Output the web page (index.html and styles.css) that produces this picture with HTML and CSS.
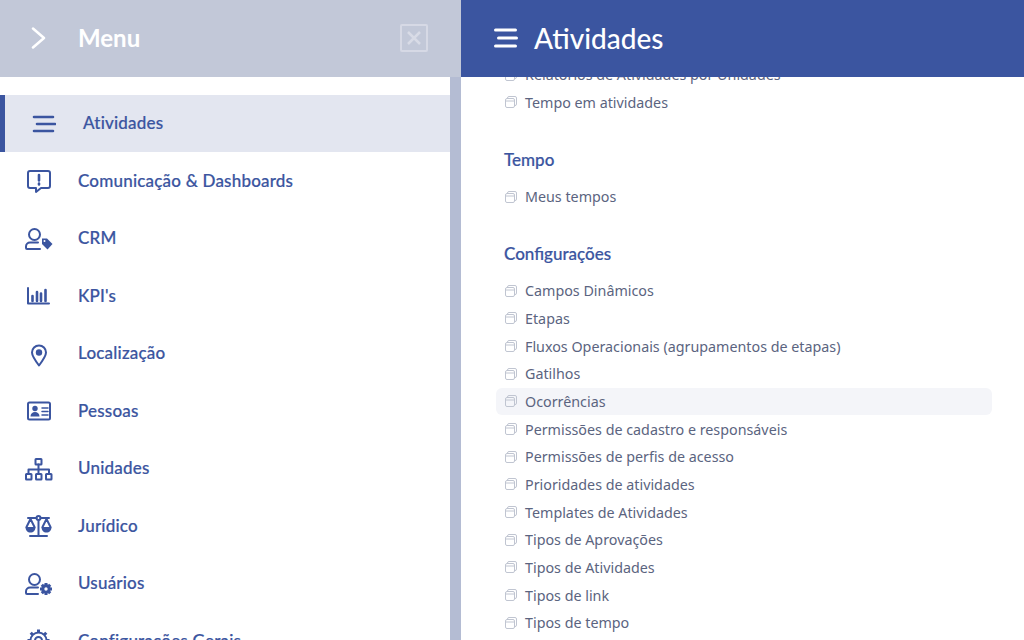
FILE: index.html
```html
<!DOCTYPE html>
<html lang="pt-BR">
<head>
    <meta charset="UTF-8">
    <title>Atividades</title>
    <link rel="stylesheet" href="styles.css">
</head>
<body>

    <!-- Shared icon for the submenu rows -->
    <svg class="sprite" width="0" height="0">
        <symbol id="i-copy" viewBox="0 0 12 12">
            <rect x="0.5" y="2.5" width="9" height="9" rx="1.5"/>
            <path d="M0.5 5h9M2.5 2.5V2a1.5 1.5 0 0 1 1.5-1.5h6A1.5 1.5 0 0 1 11.5 2v6a1.5 1.5 0 0 1-2 1.4"/>
        </symbol>
    </svg>

    <aside class="sidebar">
        <header class="side-head">
            <svg class="chevron" width="16" height="22" viewBox="0 0 16 22"><path d="M2 1.500l11 9.500-11 9.500"/></svg>
            <span class="side-title">Menu</span>
            <span class="close-box">
                <svg width="14" height="14" viewBox="0 0 14 14"><path d="M1 1l12 12M13 1L1 13"/></svg>
            </span>
        </header>

        <div class="side-body">
            <nav class="side-nav">
                <a class="nav-item active">
                    <svg class="nav-icon" viewBox="0 0 28 28"><path class="bold" d="M6 7h19M9 14h18M6 21h19"/></svg>
                    <span>Atividades</span>
                </a>
                <a class="nav-item">
                    <svg class="nav-icon" viewBox="0 0 28 28"><path d="M5 4h18a2 2 0 0 1 2 2v13a2 2 0 0 1-2 2h-7l-5 4v-4H5a2 2 0 0 1-2-2V6a2 2 0 0 1 2-2z"/><path class="bold" d="M14 8v5.500M14 16.500v1"/></svg>
                    <span>Comunicação &amp; Dashboards</span>
                </a>
                <a class="nav-item">
                    <svg class="nav-icon" viewBox="0 0 28 28"><circle cx="9.500" cy="9.500" r="5.500"/><path d="M13 17.500H5a4 4 0 0 0-4 4V23a1 1 0 0 0 1 1h13"/><path class="solid" d="M17 13.500h5l5.500 5.500-5 5.500-5.500-5.500z"/><circle class="hole" cx="19.500" cy="16" r="1"/></svg>
                    <span>CRM</span>
                </a>
                <a class="nav-item">
                    <svg class="nav-icon" viewBox="0 0 28 28"><path d="M3 6v15.500h21"/><path class="bold" d="M7.500 14v5M12 10v9M16 11.500V19M20.500 8v11"/></svg>
                    <span>KPI's</span>
                </a>
                <a class="nav-item">
                    <svg class="nav-icon" viewBox="0 0 28 28"><path d="M14 25.500C9.500 19.500 7 16 7 12.500a7 7 0 0 1 14 0c0 3.500-2.500 7-7 13z"/><circle class="solid" cx="14" cy="12.500" r="3.200"/></svg>
                    <span>Localização</span>
                </a>
                <a class="nav-item">
                    <svg class="nav-icon" viewBox="0 0 28 28"><rect x="3" y="5.500" width="22" height="17" rx="1.500"/><circle class="solid" cx="10" cy="11.500" r="2.700"/><path class="solid" d="M5.500 19.500c0-3 2-4.500 4.500-4.500s4.500 1.500 4.500 4.500z"/><path class="thin" d="M17 11h6M17 14.500h6M17 18h6"/></svg>
                    <span>Pessoas</span>
                </a>
                <a class="nav-item">
                    <svg class="nav-icon" viewBox="0 0 28 28"><rect x="10.500" y="4" width="6" height="5.500" rx="0.500"/><rect x="1" y="19" width="5.500" height="5.500" rx="0.500"/><rect x="11" y="19" width="5.500" height="5.500" rx="0.500"/><rect x="21" y="19" width="5.500" height="5.500" rx="0.500"/><path d="M13.500 9.500V19M3.500 19v-4.500h20.500V19"/></svg>
                    <span>Unidades</span>
                </a>
                <a class="nav-item">
                    <svg class="nav-icon" viewBox="0 0 28 28"><circle cx="13.500" cy="6" r="2"/><path d="M3 6h8.500M15.500 6H24M13.500 8v15.500M5 24h17M5.500 7L1.500 15M5.500 7l4 8M21.500 7l-4 8M21.500 7l4 8"/><path class="solid" d="M0.500 15h10c0 3.500-2 5.500-5 5.500s-5-2-5-5.500zM16.500 15h10c0 3.500-2 5.500-5 5.500s-5-2-5-5.500z"/></svg>
                    <span>Jurídico</span>
                </a>
                <a class="nav-item">
                    <svg class="nav-icon" viewBox="0 0 28 28"><circle cx="9.500" cy="9.500" r="5.500"/><path d="M13 17.500H5a4 4 0 0 0-4 4V23a1 1 0 0 0 1 1h11"/><circle class="cog" cx="21" cy="19" r="3.200"/><path class="teeth" d="M21 13v2.500M21 22.500V25M15 19h2.500M24.500 19H27M16.800 14.800l1.800 1.800M23.400 21.400l1.800 1.800M16.800 23.200l1.800-1.800M23.400 16.600l1.800-1.800"/></svg>
                    <span>Usuários</span>
                </a>
                <a class="nav-item">
                    <svg class="nav-icon" viewBox="0 0 28 28"><circle cx="13.500" cy="13.500" r="3.500"/><circle cx="13.500" cy="13.500" r="8"/><path class="teeth" d="M13.500 2.500v3M13.500 21.500v3M2.500 13.500h3M21.500 13.500h3M5.700 5.700l2.100 2.100M19.200 19.200l2.100 2.100M5.700 21.300l2.100-2.100M19.200 7.800l2.100-2.100"/></svg>
                    <span>Configurações Gerais</span>
                </a>
            </nav>
            <div class="side-scroll"></div>
        </div>
    </aside>

    <main class="content">
        <header class="main-head">
            <svg class="burger" width="24" height="20" viewBox="0 0 24 20"><path d="M1.500 2h20M4.500 10h18M1.500 18h20"/></svg>
            <h1>Atividades</h1>
        </header>

        <div class="main-body">
            <div class="main-scroll">
                <ul class="links">
                    <li><svg><use href="#i-copy"/></svg>Relatórios de Atividades por Unidades</li>
                    <li><svg><use href="#i-copy"/></svg>Tempo em atividades</li>
                </ul>

                <h2>Tempo</h2>
                <ul class="links">
                    <li><svg><use href="#i-copy"/></svg>Meus tempos</li>
                </ul>

                <h2>Configurações</h2>
                <ul class="links">
                    <li><svg><use href="#i-copy"/></svg>Campos Dinâmicos</li>
                    <li><svg><use href="#i-copy"/></svg>Etapas</li>
                    <li><svg><use href="#i-copy"/></svg>Fluxos Operacionais (agrupamentos de etapas)</li>
                    <li><svg><use href="#i-copy"/></svg>Gatilhos</li>
                    <li class="hover"><svg><use href="#i-copy"/></svg>Ocorrências</li>
                    <li><svg><use href="#i-copy"/></svg>Permissões de cadastro e responsáveis</li>
                    <li><svg><use href="#i-copy"/></svg>Permissões de perfis de acesso</li>
                    <li><svg><use href="#i-copy"/></svg>Prioridades de atividades</li>
                    <li><svg><use href="#i-copy"/></svg>Templates de Atividades</li>
                    <li><svg><use href="#i-copy"/></svg>Tipos de Aprovações</li>
                    <li><svg><use href="#i-copy"/></svg>Tipos de Atividades</li>
                    <li><svg><use href="#i-copy"/></svg>Tipos de link</li>
                    <li><svg><use href="#i-copy"/></svg>Tipos de tempo</li>
                </ul>
            </div>
        </div>
    </main>

</body>
</html>
```

FILE: styles.css
```css
* {
    box-sizing: border-box;
}

html, body {
    height: 100%;
}

body {
    margin: 0;
    display: flex;
    overflow: hidden;
    background-color: #fff;
    font-family: "Lato", "Liberation Sans", sans-serif;
    color: #3b55a0;
}

.sprite {
    position: absolute;
}

/* Sidebar */
.sidebar {
    width: 461px;
    flex: none;
    height: 640px;
    display: flex;
    flex-direction: column;
}

.side-head {
    height: 77px;
    flex: none;
    display: flex;
    align-items: center;
    padding: 0 33px 2px 31px;
    background-color: #c2c8d8;
    color: #fff;
}

.chevron {
    fill: none;
    stroke: #fff;
    stroke-width: 2.5;
    stroke-linecap: round;
    stroke-linejoin: round;
}

.side-title {
    margin-left: 31px;
    font-size: 24px;
    font-weight: 700;
    flex: 1;
}

.close-box {
    width: 28px;
    height: 28px;
    display: flex;
    align-items: center;
    justify-content: center;
    border: 2px solid #d6d9e5;
    border-radius: 2px;
}

.close-box svg {
    fill: none;
    stroke: #d8dbe6;
    stroke-width: 2.5;
}

.side-body {
    flex: 1;
    min-height: 0;
    display: flex;
}

.side-nav {
    flex: 1;
    padding-top: 17.9px;
    overflow: hidden;
}

.side-scroll {
    width: 11px;
    background-color: #b4bcd3;
}

.nav-item {
    height: 57.5px;
    display: flex;
    align-items: center;
    padding-left: 25px;
    font-size: 17px;
    font-weight: 500;
    letter-spacing: 0.2px;
    -webkit-text-stroke: 0.2px #3b55a0;
    color: #3b55a0;
}

.nav-item.active {
    background-color: #e3e6f0;
    border-left: 5px solid #3b55a0;
    padding-left: 23px;
}

.nav-item.active span {
    margin-left: 27px;
}

.nav-item span {
    margin: 0 0 2px 25px;
}

.nav-icon {
    width: 28px;
    height: 28px;
    flex: none;
    fill: none;
    stroke: #3b55a0;
    stroke-width: 2;
    stroke-linecap: round;
    stroke-linejoin: round;
}

.nav-icon .solid {
    fill: #3b55a0;
    stroke: none;
}

.nav-icon .hole {
    fill: #fff;
    stroke: none;
}

.nav-icon .bold {
    stroke-width: 2.6;
}

.nav-icon .thin {
    stroke-width: 1.500;
}

.nav-icon .cog {
    stroke-width: 3;
}

.nav-icon .teeth {
    stroke-width: 3;
    stroke-linecap: butt;
}

/* Main panel */
.content {
    flex: 1;
    min-width: 0;
    height: 640px;
    display: flex;
    flex-direction: column;
}

.main-head {
    height: 77px;
    flex: none;
    display: flex;
    align-items: center;
    padding: 0 0 2px 33px;
    background-color: #3b55a0;
    color: #fff;
}

.burger {
    fill: none;
    stroke: #fff;
    stroke-width: 3;
    stroke-linecap: round;
}

.main-head h1 {
    margin: 0 0 0 16px;
    font-size: 28px;
    font-weight: 500;
}

.main-body {
    flex: 1;
    min-height: 0;
    overflow: hidden;
}

/* the list is scrolled a little, first row sits under the header */
.main-scroll {
    margin-top: -16px;
    padding: 0 32px 0 35px;
}

.main-scroll h2 {
    margin: 34px 0 12.500px 8px;
    font-size: 17px;
    line-height: 20px;
    font-weight: 500;
    -webkit-text-stroke: 0.2px #3b55a0;
    color: #3b55a0;
}

.links {
    list-style: none;
    margin: 0;
    padding: 0;
}

.links li {
    height: 27.67px;
    display: flex;
    align-items: center;
    padding-left: 9px;
    border-radius: 6px;
    font-family: "Noto Sans", "Open Sans", sans-serif;
    font-size: 14.3px;
    color: #5b6480;
}

.links li svg {
    width: 12px;
    height: 12px;
    margin-right: 8px;
    flex: none;
    fill: none;
    stroke: #c0c5d1;
    stroke-width: 1;
}

.links li.hover {
    background-color: #f4f5f9;
}
```
